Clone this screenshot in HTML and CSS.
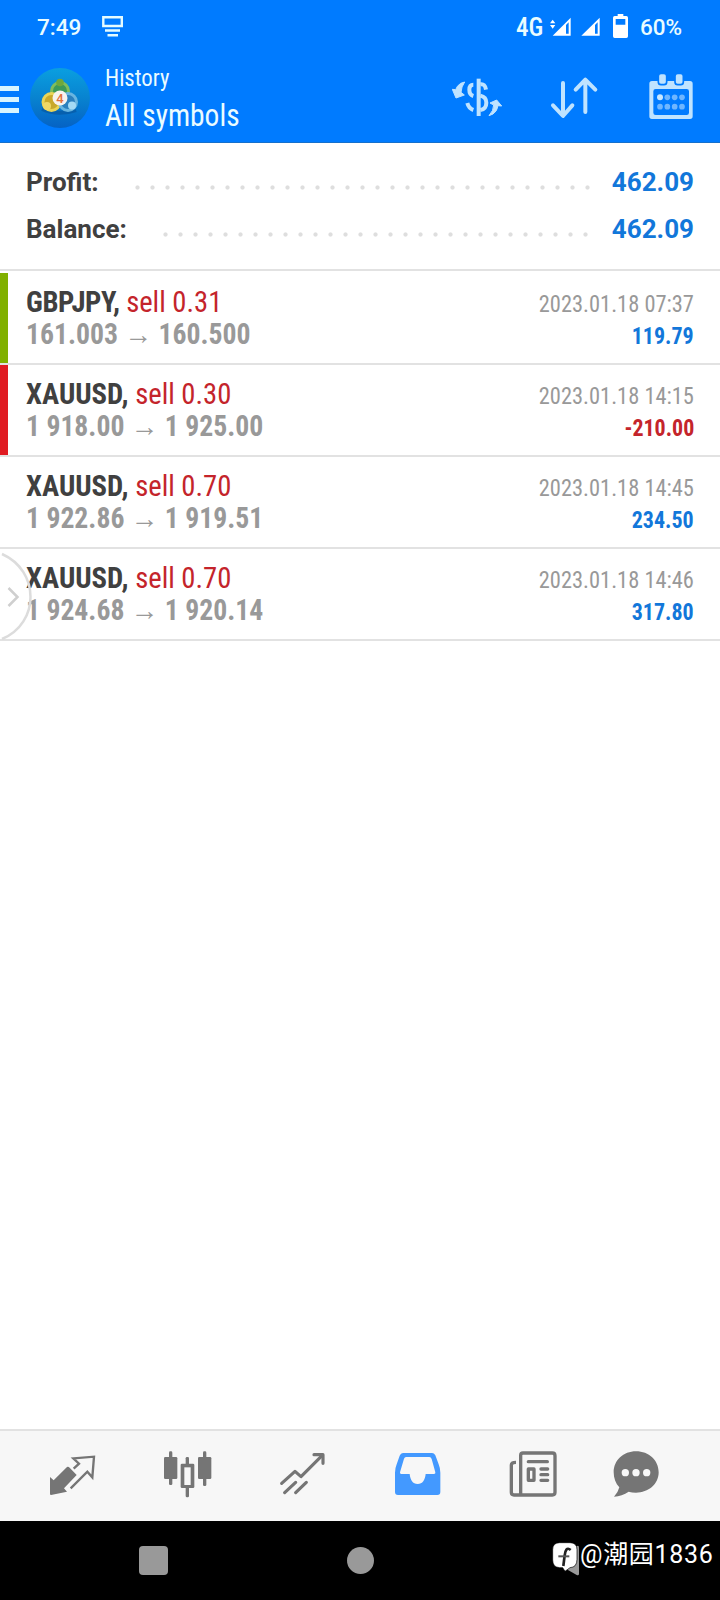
FILE: index.html
```html
<!DOCTYPE html>
<html lang="en">
<head>
    <meta charset="UTF-8">
    <meta name="viewport" content="width=device-width, initial-scale=1.0">
    <title>History</title>
    <link rel="stylesheet" href="styles.css">
</head>
<body>
    <header class="header">
        <div class="status-bar">
            <span class="clock">7:49</span>
            <svg class="cast" width="21" height="21" viewBox="0 0 21 21" fill="none" stroke="#e4fbff" stroke-width="2.4">
                <path d="M1.3 1.3H19.8V10H1.3ZM3 14.5H18M5.5 19.2H16"/>
            </svg>
            <span class="network"><span class="condensed">4G</span></span>
            <svg class="signals" width="50" height="20" viewBox="0 0 150 60">
                <g fill="#fff">
                    <path d="M0 19L8 8L16 19ZM0 24H16L8 35Z"/>
                    <path d="M8 56L62 2V56ZM48 24V50H56V16Z" fill-rule="evenodd"/>
                    <path d="M94 56L149 2V56ZM135 24V50H143V16Z" fill-rule="evenodd"/>
                </g>
            </svg>
            <svg class="battery" width="15" height="24" viewBox="0 0 45 72">
                <path fill="#fff" fill-rule="evenodd" d="M14 0H31V6H40Q45 6 45 11V67Q45 72 40 72H5Q0 72 0 67V11Q0 6 5 6H14ZM8 15V32H37V15Z"/>
            </svg>
            <span class="percent">60%</span>
        </div>
        <div class="app-bar">
            <div class="menu"><i></i><i></i><i></i></div>
            <svg class="logo" width="60" height="60" viewBox="0 0 60 60">
                <defs>
                    <linearGradient id="logoBg" x1="0" y1="0" x2="0" y2="1">
                        <stop offset="0" stop-color="#0a9fe0"/>
                        <stop offset="0.5" stop-color="#0883d0"/>
                        <stop offset="1" stop-color="#0562c4"/>
                    </linearGradient>
                </defs>
                <circle cx="30" cy="30" r="30" fill="url(#logoBg)"/>
                <path d="M12 41Q28 48 46 42" stroke="#07549b" stroke-width="4" fill="none" opacity="0.6"/>
                <circle cx="30" cy="23" r="8.5" fill="#3d9a57" stroke="#80bd5c" stroke-width="3"/>
                <circle cx="21.500" cy="34" r="8.5" fill="#c9a92b" stroke="#ead557" stroke-width="3"/>
                <circle cx="38" cy="34" r="8.5" fill="#2b80be" stroke="#68b5e0" stroke-width="3"/>
                <circle cx="30" cy="14.5" r="3.8" fill="#6fa83c"/>
                <circle cx="17" cy="38" r="4" fill="#f0d866"/>
                <circle cx="42" cy="37.5" r="4" fill="#a4daf5"/>
                <circle cx="30" cy="30" r="7.5" fill="#f7f3ee"/>
                <text x="30" y="34.5" class="logo-digit">4</text>
            </svg>
            <div class="titles">
                <div class="title"><span class="condensed">History</span></div>
                <div class="subtitle"><span class="condensed">All symbols</span></div>
            </div>
            <div class="actions">
                <svg width="50" height="50" viewBox="276 216 150 150" fill="none" stroke="#bfe3ff" stroke-width="12">
                    <path d="M356 236V348" stroke-width="12"/>
                    <path d="M361 253Q375 250 378 269M361 287Q379 291 379 308Q379 327 361 330"/>
                    <path d="M340 254Q328 254 328 269Q328 284 340 288M322 309Q326 325 340 330"/>
                    <path d="M314 246L302 250Q290 258 287 269L277 268L288 294L313 285L303 277Q304 260 314 246ZM387 347L399 342Q412 333 414 317L425 318L410 300L390 309L401 315Q401 332 387 347Z" fill="#bfe3ff" stroke="#bfe3ff" stroke-width="3" stroke-linejoin="round"/>
                </svg>
                <svg width="50" height="50" viewBox="567 216 150 150" fill="none" stroke="#bfe3ff" stroke-width="12" stroke-linecap="round" stroke-linejoin="round">
                    <path d="M609 249V347M579 316L609 348L637 316M676 336V239M647 269L676 239L706 269"/>
                </svg>
                <svg width="50" height="50" viewBox="858 216 150 150">
                    <path fill="#bfe3ff" fill-rule="evenodd" d="M876 243H990Q998 243 998 251V349Q998 357 990 357H876Q868 357 868 349V251Q868 243 876 243ZM887 267Q880 267 880 274V338Q880 345 887 345H980Q987 345 987 338V274Q987 267 980 267Z"/>
                    <g fill="#bfe3ff" stroke="#007bff" stroke-width="5">
                        <rect x="895" y="220" width="25" height="34" rx="8"/>
                        <rect x="945" y="220" width="25" height="34" rx="8"/>
                    </g>
                    <g fill="#6fb6ff">
                        <circle cx="900" cy="292" r="9" fill="#c9e8ff"/><circle cx="922" cy="292" r="8.5"/><circle cx="944" cy="292" r="8.5"/><circle cx="966" cy="292" r="8.5"/>
                        <circle cx="900" cy="320" r="8.5"/><circle cx="922" cy="320" r="8.5"/><circle cx="944" cy="320" r="8.5"/><circle cx="966" cy="320" r="8.5"/>
                    </g>
                </svg>
            </div>
        </div>
    </header>

    <section class="summary">
        <div class="summary-row">
            <span class="summary-label">Profit:</span>
            <span class="dots dots-profit"></span>
            <span class="summary-value">462.09</span>
        </div>
        <div class="summary-row">
            <span class="summary-label">Balance:</span>
            <span class="dots dots-balance"></span>
            <span class="summary-value">462.09</span>
        </div>
    </section>

    <main class="deals">
        <div class="deal take-profit">
            <div class="deal-info">
                <div class="line"><span class="condensed"><b class="tight">GBPJPY,</b> <span class="sell">sell 0.31</span></span></div>
                <div class="line prices"><span class="condensed">161.003 <span class="arrow">→</span> 160.500</span></div>
            </div>
            <div class="deal-result">
                <div class="line time"><span class="condensed">2023.01.18 07:37</span></div>
                <div class="line amount"><span class="condensed">119.79</span></div>
            </div>
        </div>
        <div class="deal stop-loss">
            <div class="deal-info">
                <div class="line"><span class="condensed"><b>XAUUSD,</b> <span class="sell">sell 0.30</span></span></div>
                <div class="line prices"><span class="condensed">1 918.00 <span class="arrow">→</span> 1 925.00</span></div>
            </div>
            <div class="deal-result">
                <div class="line time"><span class="condensed">2023.01.18 14:15</span></div>
                <div class="line amount loss"><span class="condensed">-210.00</span></div>
            </div>
        </div>
        <div class="deal">
            <div class="deal-info">
                <div class="line"><span class="condensed"><b>XAUUSD,</b> <span class="sell">sell 0.70</span></span></div>
                <div class="line prices"><span class="condensed">1 922.86 <span class="arrow">→</span> 1 919.51</span></div>
            </div>
            <div class="deal-result">
                <div class="line time"><span class="condensed">2023.01.18 14:45</span></div>
                <div class="line amount"><span class="condensed">234.50</span></div>
            </div>
        </div>
        <div class="deal">
            <div class="deal-info">
                <div class="line"><span class="condensed"><b>XAUUSD,</b> <span class="sell">sell 0.70</span></span></div>
                <div class="line prices"><span class="condensed">1 924.68 <span class="arrow">→</span> 1 920.14</span></div>
            </div>
            <div class="deal-result">
                <div class="line time"><span class="condensed">2023.01.18 14:46</span></div>
                <div class="line amount"><span class="condensed">317.80</span></div>
            </div>
            <svg class="edge-handle" width="34" height="92" viewBox="0 0 34 92" fill="none" stroke="#dcdcdc" stroke-width="2.5">
                <path d="M2 5C40 22 40 74 2 90"/>
                <path d="M8.500 39L17.500 48L8.500 57" stroke="#cfcfcf"/>
            </svg>
        </div>
    </main>

    <nav class="tab-bar">
        <svg width="48" height="48" viewBox="147 93 144 144">
            <path fill="#757575" d="M150 171L161 181L201 141Q205 139 209 143L230 165L192 205L201 215L153 225Q150 225 150 221Z"/>
            <path fill="none" stroke="#757575" stroke-width="7" d="M221 146L237 131L220 115L282 110L277 172L262 155L212 205"/>
        </svg>
        <svg width="48" height="48" viewBox="492 93 144 144" fill="#757575">
            <rect x="507" y="94" width="10" height="101" rx="4"/><rect x="492" y="111" width="40" height="66" rx="4"/>
            <rect x="609" y="94" width="10" height="104" rx="4"/><rect x="594" y="111" width="40" height="66" rx="4"/>
            <rect x="557" y="111" width="10" height="121" rx="4"/><rect x="542" y="131" width="41" height="73" rx="4"/>
            <rect x="553" y="142" width="19" height="53" fill="#f7f7f7"/>
        </svg>
        <svg width="48" height="48" viewBox="117 93 144 144" fill="none" stroke="#757575" stroke-width="9.5" stroke-linecap="round" stroke-linejoin="round">
            <path d="M125 190L165 154L183 170L246 107M134 218L167 187M167 218L199 187"/>
            <path d="M222 104H249V130"/>
        </svg>
        <svg width="48" height="48" viewBox="462 93 144 144">
            <path fill="#4399ff" d="M489 99H576Q582 99 586 106L596 133Q601 145 601 158V216Q601 225 592 225H474Q465 225 465 216V158Q465 145 470 133L479 107Q482 99 489 99Z"/>
            <path fill="#f7f7f7" d="M498 111H568Q573 111 575 117L586 157Q587 162 582 162H557C555 180 548 192 533 192C518 192 511 180 509 162H484Q479 162 480 157L492 116Q494 111 498 111Z"/>
        </svg>
        <svg width="48" height="48" viewBox="87 93 144 144" fill="none" stroke="#757575" stroke-width="10" stroke-linejoin="round">
            <path d="M122 225V106Q122 99 129 99H217Q225 99 225 107V217Q225 225 217 225H102Q94 225 94 217V135Q94 127 108 127"/>
            <path d="M145 125H202M183 147H203M183 164H203M183 181H203" stroke-linecap="round"/>
            <rect x="145" y="147" width="17" height="34"/>
        </svg>
        <svg class="chat" width="48" height="48" viewBox="396 93 144 144">
            <path fill="#757575" d="M468 94C507 94 536 121 536 157C536 193 505 218 468 218Q456 218 446 215Q426 228 402 230Q414 218 418 202C407 191 401 175 401 157C401 121 430 94 468 94Z"/>
            <circle cx="436" cy="158" r="11" fill="#f7f7f7"/><circle cx="468" cy="158" r="11" fill="#f7f7f7"/><circle cx="500" cy="158" r="11" fill="#f7f7f7"/>
        </svg>
    </nav>

    <footer class="system-nav">
        <span class="recent"></span>
        <span class="home"></span>
        <div class="watermark">
            <svg width="28" height="36" viewBox="216 363 84 108">
                <path fill="#999" d="M291 378Q297 375 297 383V461Q297 468 290 465L226 428Q218 422 226 416Z"/>
                <path fill="#fff" stroke="#000" stroke-width="2" d="M239 368H270Q291 368 291 389V418Q291 442 270 443L255 454L248 443H239Q218 442 218 420V389Q218 368 239 368Z"/>
                <path fill="none" stroke="#222" stroke-width="8" d="M272 390C260 380 256 392 254 406L250 438"/>
                <path fill="none" stroke="#555" stroke-width="6" d="M235 409H268"/>
            </svg>
            <span class="account">@潮园1836</span>
        </div>
    </footer>
</body>
</html>
```
FILE: styles.css
```css
/* General Styles */
* {
    box-sizing: border-box;
}

body {
    margin: 0;
    width: 720px;
    height: 1600px;
    display: flex;
    flex-direction: column;
    overflow: hidden;
    background: #fff;
    color: #404040;
    font-family: Roboto, "Noto Sans CJK SC", sans-serif;
}

svg {
    display: block;
    flex: none;
}

.condensed {
    display: inline-block;
    font-family: "Roboto Condensed", Roboto, sans-serif;
    font-stretch: 75%;
    white-space: nowrap;
    transform-origin: left;
}

/* Header */
.header {
    height: 143px;
    background: #007bff;
    border-bottom: 1px solid #1670cc;
    color: #eafcff;
}

.status-bar {
    display: flex;
    height: 52px;
    padding-left: 37px;
    font-size: 22.5px;
    font-weight: 500;
    line-height: 54px;
}

.clock {
    width: 65px;
}

.cast {
    margin-top: 16px;
}

.network {
    width: 34px;
    margin-left: 393px;
    font-size: 26px;
    font-weight: 500;
}

.network .condensed {
    transform: scaleX(0.97);
}

.signals {
    margin-top: 17px;
}

.battery {
    margin: 14px 12px 0 13px;
}

.app-bar {
    display: flex;
    height: 90px;
}

.menu {
    width: 30px;
    padding-top: 34px;
}

.menu i {
    display: block;
    width: 19px;
    height: 5px;
    margin-bottom: 6px;
    background: #d8f5ff;
}

.logo {
    margin-top: 16px;
}

.logo-digit {
    fill: #e2703a;
    font-size: 13px;
    font-weight: 500;
    text-anchor: middle;
}

.titles {
    flex: 1;
    padding: 11px 0 0 15px;
}

.title {
    font-size: 24px;
    line-height: 30px;
}

.title .condensed {
    transform: scaleX(0.95);
}

.subtitle {
    font-size: 32px;
    line-height: 45px;
}

.subtitle .condensed {
    transform: scaleX(0.92);
}

.actions {
    display: flex;
    gap: 47px;
    padding: 20px 24px 0 0;
}

/* Summary */
.summary {
    height: 128px;
    padding: 16px 26px 0;
    border-bottom: 2px solid #e2e2e2;
    font-size: 26px;
    font-weight: 700;
    line-height: 47px;
}

.summary-row {
    display: flex;
    align-items: flex-start;
    justify-content: space-between;
    height: 47px;
}

.summary-value {
    color: #1277da;
}

.dots {
    height: 5px;
    margin: 26px 17px 0 auto;
    background: radial-gradient(circle at 7.5px 2.5px, #dedede 1.7px, transparent 2.5px) 0 0 / 15px 5px repeat-x;
}

.dots-profit {
    width: 465px;
}

.dots-balance {
    width: 435px;
    margin-right: 19px;
}

/* Deals */
.deals {
    flex: 1;
    padding-top: 2px;
}

.deal {
    position: relative;
    display: flex;
    justify-content: space-between;
    height: 92px;
    padding-right: 26px;
    border-bottom: 2px solid #e2e2e2;
}

.deal::before {
    content: "";
    width: 7.5px;
}

.take-profit::before {
    background: #80b000;
}

.stop-loss::before {
    background: #e01b22;
}

.deal-info {
    flex: 1;
    padding: 13px 0 0 18.5px;
    font-size: 30px;
}

.deal-info .condensed {
    transform: scaleX(0.955);
}

.line {
    height: 32px;
    line-height: 32px;
}

.tight {
    letter-spacing: -0.4px;
}

.sell {
    color: #c4242b;
}

.prices {
    color: #999;
    font-size: 29px;
    font-weight: 700;
}

.arrow {
    display: inline-block;
    font-weight: 400;
}

.deal-result {
    padding-top: 15px;
    font-size: 24px;
    text-align: right;
}

.deal-result .condensed {
    transform-origin: right;
}

.time {
    color: #999;
}

.time .condensed {
    transform: scaleX(0.935);
}

.amount {
    color: #1277da;
    font-weight: 700;
}

.amount .condensed {
    transform: scaleX(0.915);
}

.loss {
    color: #c4242b;
}

.edge-handle {
    position: absolute;
    left: 0;
    top: 0;
}

/* Bottom tabs */
.tab-bar {
    display: flex;
    gap: 67px;
    height: 92px;
    padding: 20px 0 0 49px;
    border-top: 2px solid #e2e2e2;
    background: #f7f7f7;
}

.chat {
    margin-left: -12px;
}

/* System navigation */
.system-nav {
    display: flex;
    height: 79px;
    background: #000;
}

.recent {
    width: 29px;
    height: 29px;
    margin: 25px 0 0 139px;
    border-radius: 4px;
    background: #999;
}

.home {
    width: 27px;
    height: 27px;
    margin: 26px 0 0 179px;
    border-radius: 50%;
    background: #999;
}

.watermark {
    display: flex;
    margin: 20px 0 0 178px;
}

.account {
    color: #fff;
    font-size: 25px;
    line-height: 28px;
    letter-spacing: 0.7px;
    white-space: nowrap;
}
```
